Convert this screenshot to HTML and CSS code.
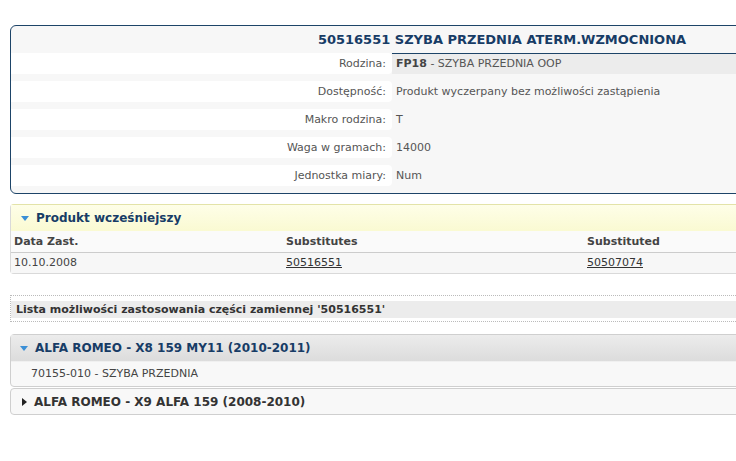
FILE: index.html
```html
<!DOCTYPE html>
<html>
<head>
<meta charset="utf-8">
<link rel="stylesheet" href="styles.css">
</head>
<body>
<div class="page">
  <div class="detail">
    <div class="title">50516551 SZYBA PRZEDNIA ATERM.WZMOCNIONA</div>
    <div class="rows">
      <div class="label">Rodzina:</div>
      <div class="value first"><b>FP18</b> - SZYBA PRZEDNIA OOP</div>
      <div class="label">Dostępność:</div>
      <div class="value">Produkt wyczerpany bez możliwości zastąpienia</div>
      <div class="label">Makro rodzina:</div>
      <div class="value">T</div>
      <div class="label">Waga w gramach:</div>
      <div class="value">14000</div>
      <div class="label">Jednostka miary:</div>
      <div class="value">Num</div>
    </div>
  </div>

  <div class="prev">
    <div class="prev-head"><span class="tri-down"></span>Produkt wcześniejszy</div>
    <div class="grid head">
      <div>Data Zast.</div>
      <div>Substitutes</div>
      <div>Substituted</div>
    </div>
    <div class="grid data">
      <div>10.10.2008</div>
      <div><a href="#">50516551</a></div>
      <div><a href="#">50507074</a></div>
    </div>
  </div>

  <div class="list">
    <div class="list-bar">Lista możliwości zastosowania części zamiennej '50516551'</div>
  </div>

  <div class="acc">
    <div class="acc-head open"><span class="tri-down"></span>ALFA ROMEO - X8 159 MY11 (2010-2011)</div>
    <div class="acc-body">70155-010 - SZYBA PRZEDNIA</div>
  </div>
  <div class="acc closed">
    <div class="acc-head"><span class="tri-right"></span>ALFA ROMEO - X9 ALFA 159 (2008-2010)</div>
  </div>
</div>
</body>
</html>
```

FILE: styles.css
```css
html, body {
  margin: 0;
  padding: 0;
  overflow: hidden;
  background: #fff;
}
body {
  font-family: "DejaVu Sans", Verdana, sans-serif;
  font-size: 11px;
  color: #444;
}
.page {
  width: 984px;
  padding: 25px 0 0 10px;
}
.detail {
  border: 1px solid #1d4468;
  border-radius: 6px;
  background: #f7f7f7;
  overflow: hidden;
}
.title {
  height: 27px;
  line-height: 27px;
  text-align: center;
  font-weight: bold;
  font-size: 13px;
  color: #173c66;
}
.rows {
  display: grid;
  grid-template-columns: 381px 1fr;
  row-gap: 7px;
  padding-bottom: 7px;
}
.label {
  background: #fff;
  height: 21px;
  line-height: 21px;
  text-align: right;
  padding-right: 6px;
  color: #555;
  border-radius: 0 4px 4px 0;
}
.value {
  height: 21px;
  line-height: 21px;
  padding-left: 4px;
  color: #555;
}
.value.first {
  background: #ececec;
  border-top: 1px solid #1d4468;
  height: 20px;
  line-height: 19px;
}
.value b { color: #444; }

.prev {
  margin-top: 10px;
  border: 1px solid #d9d9d9;
  border-top-color: #e3e3a8;
  border-radius: 4px 0 0 4px;
}
.prev-head {
  height: 26px;
  background: linear-gradient(#fefee8, #fafad2);
  font-weight: bold;
  font-size: 12px;
  color: #173c66;
  padding-left: 10px;
  display: flex;
  align-items: center;
}
.tri-down {
  width: 0;
  height: 0;
  border-left: 4px solid transparent;
  border-right: 4px solid transparent;
  border-top: 5px solid #3b8fd6;
  margin-right: 7px;
}
.tri-right {
  width: 0;
  height: 0;
  border-top: 4px solid transparent;
  border-bottom: 4px solid transparent;
  border-left: 5px solid #222;
  margin-right: 7px;
  margin-left: 2px;
}
.grid {
  display: grid;
  grid-template-columns: 272px 301px 1fr;
  padding-left: 3px;
}
.grid.head {
  height: 21px;
  line-height: 21px;
  font-weight: bold;
  color: #444;
  background: #fafafa;
  border-bottom: 1px solid #ccc;
}
.grid.data {
  height: 20px;
  line-height: 20px;
  background: #f7f7f7;
  color: #444;
}
.grid a { color: #333; }

.list {
  margin-top: 21px;
  border-top: 1px dotted #bbb;
  border-bottom: 1px dotted #bbb;
  border-left: 1px dotted #bbb;
  padding: 5px 0 3px 0;
}
.list-bar {
  background: #ececec;
  height: 17px;
  line-height: 17px;
  padding-left: 5px;
  font-weight: bold;
  color: #333;
}

.acc {
  margin-top: 12px;
  border: 1px solid #cfcfcf;
  border-radius: 4px 0 0 4px;
  background: #f8f8f8;
}
.acc.closed { margin-top: 1px; }
.acc-head {
  height: 26px;
  display: flex;
  align-items: center;
  padding-left: 9px;
  font-weight: bold;
  font-size: 12px;
  color: #333;
}
.acc.closed .acc-head { height: 25px; }
.acc-head.open {
  background: linear-gradient(#ececec, #dcdcdc);
  color: #173c66;
}
.acc-body {
  height: 24px;
  line-height: 24px;
  padding-left: 20px;
  color: #444;
  border-top: 1px solid #f0f0f0;
}
```
